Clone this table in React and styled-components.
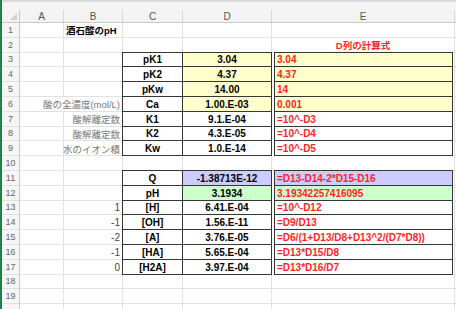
import React from 'react';
import styled, { createGlobalStyle } from 'styled-components';

const Global = createGlobalStyle`
  html, body { margin: 0; padding: 0; background: #fff; }
  body {
    font-family: "Liberation Sans", "Noto Sans CJK JP", sans-serif;
    overflow: hidden;
  }
`;

const GRID = '#e1e1e1';
const INK = '#363636';
const YELLOW = '#ffffcc';
const LAVENDER = '#ccccff';
const MINT = '#ccffcc';
const RED = '#ff1f1f';

const Window = styled.div`
  display: flex;
  width: 456px;
  height: 309px;
  overflow: hidden;
  background: #fff;
`;

const GreenEdge = styled.div`
  width: 2px;
  flex: none;
  background: #21804a;
`;

const Sheet = styled.div`
  flex: 1;
  min-width: 0;
  display: flex;
  flex-direction: column;
`;

const TopStrip = styled.div`
  height: 10px;
  flex: none;
  box-sizing: border-box;
  background: #f4f4f4;
  border-top: 2px solid #dadada;
`;

const Grid = styled.div`
  display: grid;
  grid-template-columns: 18px 44px 59px 60px 89px 183px 1fr;
  grid-template-rows: 13px;
  grid-auto-rows: 14.8px;
`;

const Corner = styled.div`
  position: relative;
  box-sizing: border-box;
  background: #f3f3f3;
  border-right: 1px solid #c8c8c8;
  border-bottom: 1px solid #c8c8c8;
  &::after {
    content: '';
    position: absolute;
    right: 2px;
    bottom: 2px;
    border-style: solid;
    border-width: 0 0 7px 7px;
    border-color: transparent transparent #d2d2d2 transparent;
  }
`;

const ColHead = styled.div`
  box-sizing: border-box;
  display: flex;
  align-items: center;
  justify-content: center;
  background: #f3f3f3;
  border-right: 1px solid #d6d6d6;
  border-bottom: 1px solid #c8c8c8;
  font-size: 10px;
  color: #555;
`;

const RowHead = styled.div`
  box-sizing: border-box;
  display: flex;
  align-items: center;
  justify-content: center;
  background: #f6f6f6;
  border-right: 1px solid #c8c8c8;
  border-bottom: 1px solid ${GRID};
  font-size: 9px;
  color: #666;
`;

const justify = (a) =>
  a === 'right' ? 'flex-end' : a === 'center' ? 'center' : 'flex-start';

const shadowFor = (p) => {
  const s = [];
  if (p.$edgeLeft) s.push(`-1px 0 0 ${INK}`);
  if (p.$edgeTop) s.push(`0 -1px 0 ${INK}`);
  if (p.$edgeLeft && p.$edgeTop) s.push(`-1px -1px 0 ${INK}`);
  return s.length ? s.join(', ') : 'none';
};

const Cell = styled.div`
  box-sizing: border-box;
  min-width: 0;
  display: flex;
  align-items: center;
  justify-content: ${(p) => justify(p.$align)};
  padding: 1px 2px 0;
  white-space: nowrap;
  background: ${(p) => p.$bg || '#fff'};
  border-right: 1px solid
    ${(p) => (p.$frame ? INK : p.$noRight ? 'transparent' : GRID)};
  border-bottom: 1px solid ${(p) => (p.$frame ? INK : GRID)};
  box-shadow: ${shadowFor};
  font-size: ${(p) => (p.$cjk ? '9.5px' : '10px')};
  font-weight: ${(p) => (p.$bold ? 700 : 400)};
  color: ${(p) => p.$color || '#000'};
`;

const FormulaSlot = styled.div`
  box-sizing: border-box;
  display: flex;
  padding: 0 1px 0 2px;
  border-right: 1px solid ${GRID};
`;

const FormulaBox = styled.div`
  flex: 1;
  min-width: 0;
  box-sizing: border-box;
  display: flex;
  align-items: center;
  padding: 1px 2px 0;
  overflow: hidden;
  white-space: nowrap;
  background: ${(p) => p.$bg || '#fff'};
  border: 1px solid ${INK};
  border-top: none;
  box-shadow: ${(p) => (p.$first ? `0 -1px 0 ${INK}` : 'none')};
  font-size: 10px;
  font-weight: 700;
  color: ${RED};
`;

const rows = [
  { n: 1, title: '酒石酸のpH' },
  { n: 2, heading: 'D列の計算式' },
  { n: 3, c: 'pK1', d: '3.04', e: '3.04', bg: YELLOW, first: true },
  { n: 4, c: 'pK2', d: '4.37', e: '4.37', bg: YELLOW },
  { n: 5, c: 'pKw', d: '14.00', e: '14', bg: YELLOW },
  { n: 6, label: '酸の全濃度(mol/L)', spill: true, c: 'Ca', d: '1.00.E-03', e: '0.001', bg: YELLOW },
  { n: 7, label: '酸解離定数', c: 'K1', d: '9.1.E-04', e: '=10^-D3' },
  { n: 8, label: '酸解離定数', c: 'K2', d: '4.3.E-05', e: '=10^-D4' },
  { n: 9, label: '水のイオン積', c: 'Kw', d: '1.0.E-14', e: '=10^-D5' },
  { n: 10 },
  { n: 11, c: 'Q', d: '-1.38713E-12', e: '=D13-D14-2*D15-D16', bg: LAVENDER, first: true },
  { n: 12, c: 'pH', d: '3.1934', e: '3.19342257416095', bg: MINT },
  { n: 13, num: '1', c: '[H]', d: '6.41.E-04', e: '=10^-D12' },
  { n: 14, num: '-1', c: '[OH]', d: '1.56.E-11', e: '=D9/D13' },
  { n: 15, num: '-2', c: '[A]', d: '3.76.E-05', e: '=D6/(1+D13/D8+D13^2/(D7*D8))' },
  { n: 16, num: '-1', c: '[HA]', d: '5.65.E-04', e: '=D13*D15/D8' },
  { n: 17, num: '0', c: '[H2A]', d: '3.97.E-04', e: '=D13*D16/D7' },
  { n: 18 },
  { n: 19 },
  { n: 20, hidden: true },
];

function SheetRow({ r }) {
  const framed = r.c !== undefined;
  return (
    <>
      <RowHead>{r.hidden ? null : r.n}</RowHead>
      <Cell $noRight={r.spill} />
      {r.title ? (
        <Cell $bold $cjk>{r.title}</Cell>
      ) : r.label ? (
        <Cell $align="right" $cjk $color="#777">{r.label}</Cell>
      ) : r.num ? (
        <Cell $align="right" $color="#444">{r.num}</Cell>
      ) : (
        <Cell />
      )}
      {framed ? (
        <>
          <Cell $frame $edgeLeft $edgeTop={r.first} $align="center" $bold>
            {r.c}
          </Cell>
          <Cell $frame $edgeTop={r.first} $align="center" $bold $bg={r.bg}>
            {r.d}
          </Cell>
          <FormulaSlot>
            <FormulaBox $first={r.first} $bg={r.bg}>{r.e}</FormulaBox>
          </FormulaSlot>
        </>
      ) : (
        <>
          <Cell />
          <Cell />
          {r.heading ? (
            <Cell $align="center" $bold $cjk $color={RED}>{r.heading}</Cell>
          ) : (
            <Cell />
          )}
        </>
      )}
      <Cell />
    </>
  );
}

export default function App() {
  return (
    <>
      <Global />
      <Window>
        <GreenEdge />
        <Sheet>
          <TopStrip />
          <Grid>
            <Corner />
            {['A', 'B', 'C', 'D', 'E', ''].map((h, i) => (
              <ColHead key={i}>{h}</ColHead>
            ))}
            {rows.map((r) => (
              <SheetRow key={r.n} r={r} />
            ))}
          </Grid>
        </Sheet>
      </Window>
    </>
  );
}
